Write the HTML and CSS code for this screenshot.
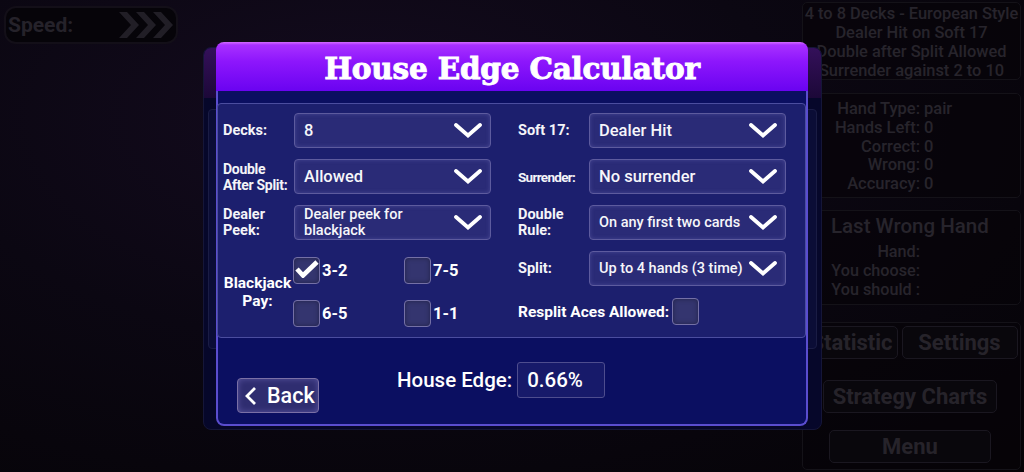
FILE: index.html
```html
<!DOCTYPE html>
<html lang="en">
<head>
  <meta charset="UTF-8">
  <meta name="viewport" content="width=device-width, initial-scale=1.0">
  <title>Blackjack Trainer - House Edge</title>
  <link rel="stylesheet" href="styles.css">
</head>
<body>
  <!-- game screen (dimmed behind the dialogs) -->
  <div class="screen">
    <div class="speed">
      <span>Speed:</span>
      <svg class="speed-arrows" width="56" height="26" viewBox="0 0 56 26">
        <polygon points="0,0 8,0 20,13 8,26 0,26 12,13" />
        <polygon points="17,0 25,0 37,13 25,26 17,26 29,13" />
        <polygon points="34,0 42,0 54,13 42,26 34,26 46,13" />
      </svg>
    </div>

    <aside class="sidebar">
      <div class="card rules">
        <div>4 to 8 Decks - European Style</div>
        <div>Dealer Hit on Soft 17</div>
        <div>Double after Split Allowed</div>
        <div>Surrender against 2 to 10</div>
      </div>

      <div class="card stats">
        <span class="k">Hand Type:</span><span class="v">pair</span>
        <span class="k">Hands Left:</span><span class="v">0</span>
        <span class="k">Correct:</span><span class="v">0</span>
        <span class="k">Wrong:</span><span class="v">0</span>
        <span class="k">Accuracy:</span><span class="v">0</span>
      </div>

      <div class="card wrong">
        <div class="wrong-title">Last Wrong Hand</div>
        <div class="wrong-rows">
          <span class="k">Hand:</span><span class="v"></span>
          <span class="k">You choose:</span><span class="v"></span>
          <span class="k">You should :</span><span class="v"></span>
        </div>
      </div>

      <div class="card menu-card">
        <div class="menu-row">
          <div class="menu-btn">Statistic</div>
          <div class="menu-btn">Settings</div>
        </div>
        <div class="menu-btn charts-btn">Strategy Charts</div>
        <div class="menu-btn main-btn">Menu</div>
      </div>
    </aside>
  </div>

  <!-- previous dialog, still open underneath -->
  <div class="dialog-under">
    <div class="under-head"></div>
    <div class="under-panel"></div>
  </div>

  <!-- House Edge Calculator -->
  <div class="dialog">
    <div class="dialog-head">House Edge Calculator</div>
    <div class="dialog-body">
      <div class="rules-panel">
        <div class="col">
          <div class="field">
            <label>Decks:</label>
            <div class="select"><span>8</span>
              <svg class="chev" viewBox="0 0 28 15"><polyline points="2,2 14,12.5 26,2" /></svg>
            </div>
          </div>
          <div class="field">
            <label class="squeeze">Double After Split:</label>
            <div class="select"><span>Allowed</span>
              <svg class="chev" viewBox="0 0 28 15"><polyline points="2,2 14,12.5 26,2" /></svg>
            </div>
          </div>
          <div class="field">
            <label>Dealer Peek:</label>
            <div class="select small"><span>Dealer peek for blackjack</span>
              <svg class="chev" viewBox="0 0 28 15"><polyline points="2,2 14,12.5 26,2" /></svg>
            </div>
          </div>
          <div class="pay">
            <label class="pay-label">Blackjack Pay:</label>
            <div class="pay-grid">
              <div class="check-item">
                <span class="box">
                  <svg class="tick" viewBox="0 0 24 18"><polyline points="2,9 8,15.5 22,2" /></svg>
                </span>3-2
              </div>
              <div class="check-item"><span class="box"></span>7-5</div>
              <div class="check-item"><span class="box"></span>6-5</div>
              <div class="check-item"><span class="box"></span>1-1</div>
            </div>
          </div>
        </div>

        <div class="col">
          <div class="field">
            <label>Soft 17:</label>
            <div class="select"><span>Dealer Hit</span>
              <svg class="chev" viewBox="0 0 28 15"><polyline points="2,2 14,12.5 26,2" /></svg>
            </div>
          </div>
          <div class="field">
            <label class="squeeze narrow">Surrender:</label>
            <div class="select"><span>No surrender</span>
              <svg class="chev" viewBox="0 0 28 15"><polyline points="2,2 14,12.5 26,2" /></svg>
            </div>
          </div>
          <div class="field">
            <label>Double Rule:</label>
            <div class="select small"><span>On any first two cards</span>
              <svg class="chev" viewBox="0 0 28 15"><polyline points="2,2 14,12.5 26,2" /></svg>
            </div>
          </div>
          <div class="field">
            <label>Split:</label>
            <div class="select small"><span>Up to 4 hands (3 time)</span>
              <svg class="chev" viewBox="0 0 28 15"><polyline points="2,2 14,12.5 26,2" /></svg>
            </div>
          </div>
          <div class="resplit">
            <span>Resplit Aces Allowed:</span><span class="box"></span>
          </div>
        </div>
      </div>

      <div class="calc-footer">
        <div class="back-btn">
          <svg viewBox="0 0 12 20" width="12" height="20"><polyline points="10,2 2,10 10,18" /></svg>
          <span>Back</span>
        </div>
        <div class="edge">
          <span>House Edge:</span>
          <div class="edge-value">0.66%</div>
        </div>
      </div>
    </div>
  </div>
</body>
</html>
```

FILE: styles.css
```css
body {
  margin: 0;
  width: 1024px;
  height: 472px;
  overflow: hidden;
  position: relative;
  font-family: Roboto, "Liberation Sans", sans-serif;
  background: radial-gradient(ellipse at 35% 25%, #140b1f 0%, #0b0712 45%, #050306 100%);
  color: #fff;
}

/* ---------- game screen ---------- */

.screen {
  display: flex;
  justify-content: space-between;
  height: 472px;
}

.speed {
  box-sizing: border-box;
  margin: 6px 0 0 4px;
  width: 174px;
  height: 38px;
  padding: 0 1px 0 2px;
  display: flex;
  align-items: center;
  justify-content: space-between;
  border: 2px solid #130f18;
  border-radius: 12px;
  background: #060409;
  color: #25222a;
  font-size: 21px;
  font-weight: 700;
}

.speed-arrows {
  fill: #211e26;
}

.sidebar {
  width: 219px;
  margin-right: 3px;
  display: flex;
  flex-direction: column;
}

.card {
  box-sizing: border-box;
  border: 1px solid #141218;
  border-radius: 5px;
  background: rgba(6, 4, 9, 0.6);
  color: #27242c;
  font-weight: 500;
}

.rules {
  margin-top: 2px;
  height: 78px;
  padding-top: 1px;
  text-align: center;
  font-size: 16.4px;
  line-height: 19px;
  white-space: nowrap;
}

.stats {
  margin-top: 13px;
  height: 105px;
  padding-top: 6px;
  display: grid;
  grid-template-columns: 117px 1fr;
  grid-auto-rows: 18.8px;
  column-gap: 4px;
  font-size: 16.5px;
  line-height: 18.8px;
}

.k {
  text-align: right;
}

.wrong {
  margin-top: 12px;
  height: 95px;
}

.wrong-title {
  margin: 3px 0 0 28px;
  font-size: 20.5px;
  line-height: 24px;
}

.wrong-rows {
  margin-top: 4px;
  display: grid;
  grid-template-columns: 117px 1fr;
  grid-auto-rows: 19px;
  column-gap: 4px;
  font-size: 16.2px;
  line-height: 19px;
}

.menu-card {
  margin-top: 17px;
  height: 148px;
  display: flex;
  flex-direction: column;
  align-items: center;
}

.menu-btn {
  box-sizing: border-box;
  height: 33px;
  display: flex;
  align-items: center;
  justify-content: center;
  border: 1px solid #1a1720;
  border-radius: 5px;
  background: #09070c;
  color: #26232a;
  font-size: 22px;
  font-weight: 700;
}

.menu-row {
  margin-top: 3px;
  display: flex;
  gap: 4px;
}

.menu-row .menu-btn {
  width: 92px;
}

.menu-row .menu-btn + .menu-btn {
  width: 116px;
}

.charts-btn {
  margin-top: 21px;
  width: 174px;
  margin-left: -3px;
}

.main-btn {
  margin-top: 17px;
  width: 162px;
  margin-left: -3px;
}

/* ---------- dialog left open underneath ---------- */

.dialog-under {
  position: absolute;
  left: 203px;
  top: 47px;
  width: 619px;
  height: 383px;
  box-sizing: border-box;
  border: 1px solid #151638;
  border-radius: 8px;
  background: #06072a;
  overflow: hidden;
}

.under-head {
  height: 50px;
  background: linear-gradient(#34105a, #1c0838);
}

.under-panel {
  margin: 11px 4px 0;
  height: 238px;
  border: 1px solid #1a1c44;
  border-radius: 4px;
  background: #0b0d36;
}

/* ---------- House Edge Calculator ---------- */

.dialog {
  position: absolute;
  left: 216px;
  top: 42px;
  width: 592px;
  height: 384px;
  display: flex;
  flex-direction: column;
}

.dialog-head {
  height: 49px;
  border-radius: 8px 8px 0 0;
  background: linear-gradient(#d46cff 0, #a830ff 6%, #8d16fc 40%, #6a03f1 100%);
  text-align: center;
  font-family: "DejaVu Serif", "Liberation Serif", serif;
  font-weight: 700;
  font-size: 29.5px;
  line-height: 53px;
  letter-spacing: -0.2px;
  color: #fff;
  -webkit-text-stroke: 0.9px #fff;
}

.dialog-body {
  flex: 1;
  display: flex;
  flex-direction: column;
  border: 2px solid #5a4dcf;
  border-top: 0;
  border-radius: 0 0 8px 8px;
  background: #0b0f61;
}

.rules-panel {
  box-sizing: border-box;
  margin-top: 12px;
  margin-left: -1px;
  height: 235px;
  padding: 9px 0 0 4px;
  display: grid;
  grid-template-columns: 290px 1fr;
  column-gap: 5px;
  border: 1px solid #4b4d9f;
  border-radius: 4px;
  background: #1c1f6e;
}

.col {
  display: flex;
  flex-direction: column;
  gap: 11px;
}

.field {
  display: flex;
  align-items: center;
  height: 35px;
}

.field label {
  width: 71px;
  padding-left: 1px;
  font-size: 14.5px;
  font-weight: 700;
  line-height: 16px;
  color: #f4f4f8;
}

.field .squeeze {
  font-size: 14px;
  letter-spacing: -0.3px;
}

.field .narrow {
  font-size: 13.5px;
  letter-spacing: -0.7px;
}

.select {
  box-sizing: border-box;
  width: 197px;
  height: 35px;
  padding: 0 8px 0 9px;
  display: flex;
  align-items: center;
  justify-content: space-between;
  border: 1px solid #5d5b9e;
  border-radius: 4px;
  background: #2a2b77;
  box-shadow: inset 0 0 4px rgba(150, 150, 230, 0.25);
  font-size: 16.5px;
  font-weight: 500;
  color: #f6f6fa;
}

.select.small {
  font-size: 14.5px;
  line-height: 16px;
}

.chev {
  flex: none;
  width: 28px;
  height: 15px;
  fill: none;
  stroke: #fff;
  stroke-width: 3.8;
  stroke-linecap: round;
}

.box {
  box-sizing: border-box;
  flex: none;
  width: 27px;
  height: 27px;
  display: flex;
  align-items: center;
  justify-content: center;
  border: 1.5px solid #7470a6;
  border-radius: 4px;
  background: #34356f;
  box-shadow: inset 0 0 5px rgba(0, 0, 0, 0.35);
}

.tick {
  width: 24px;
  height: 18px;
  margin: -3px 0 0 1px;
  fill: none;
  stroke: #fff;
  stroke-width: 4.6;
  stroke-linejoin: miter;
}

.pay {
  margin-top: 6px;
  display: flex;
  align-items: center;
}

.pay-label {
  width: 71px;
  text-align: center;
  font-size: 15.5px;
  font-weight: 700;
  line-height: 18px;
}

.pay-grid {
  display: grid;
  grid-template-columns: 111px 80px;
  row-gap: 16px;
}

.check-item {
  display: flex;
  align-items: center;
  gap: 2px;
  font-size: 16.5px;
  font-weight: 700;
}

.resplit {
  margin-top: 1px;
  padding-left: 1px;
  display: flex;
  align-items: center;
  gap: 3px;
  font-size: 15.5px;
  font-weight: 700;
}

.calc-footer {
  display: flex;
  align-items: flex-start;
  padding: 24px 0 0 19px;
}

.back-btn {
  box-sizing: border-box;
  margin-top: 16px;
  width: 82px;
  height: 35px;
  padding-left: 7px;
  display: flex;
  align-items: center;
  gap: 10px;
  border: 1px solid #7a70a6;
  border-radius: 4px;
  background: #2f2d70;
  box-shadow: inset 0 0 6px rgba(150, 140, 230, 0.4);
  font-size: 21.5px;
  font-weight: 500;
}

.back-btn svg {
  fill: none;
  stroke: #fff;
  stroke-width: 2.8;
}

.edge {
  margin-left: 78px;
  display: flex;
  align-items: center;
  gap: 5px;
  font-size: 20.5px;
  font-weight: 500;
}

.edge-value {
  box-sizing: border-box;
  width: 88px;
  height: 36px;
  padding-left: 9px;
  display: flex;
  align-items: center;
  border: 1px solid #4e4d8e;
  border-radius: 3px;
  background: #171a6a;
}
```
